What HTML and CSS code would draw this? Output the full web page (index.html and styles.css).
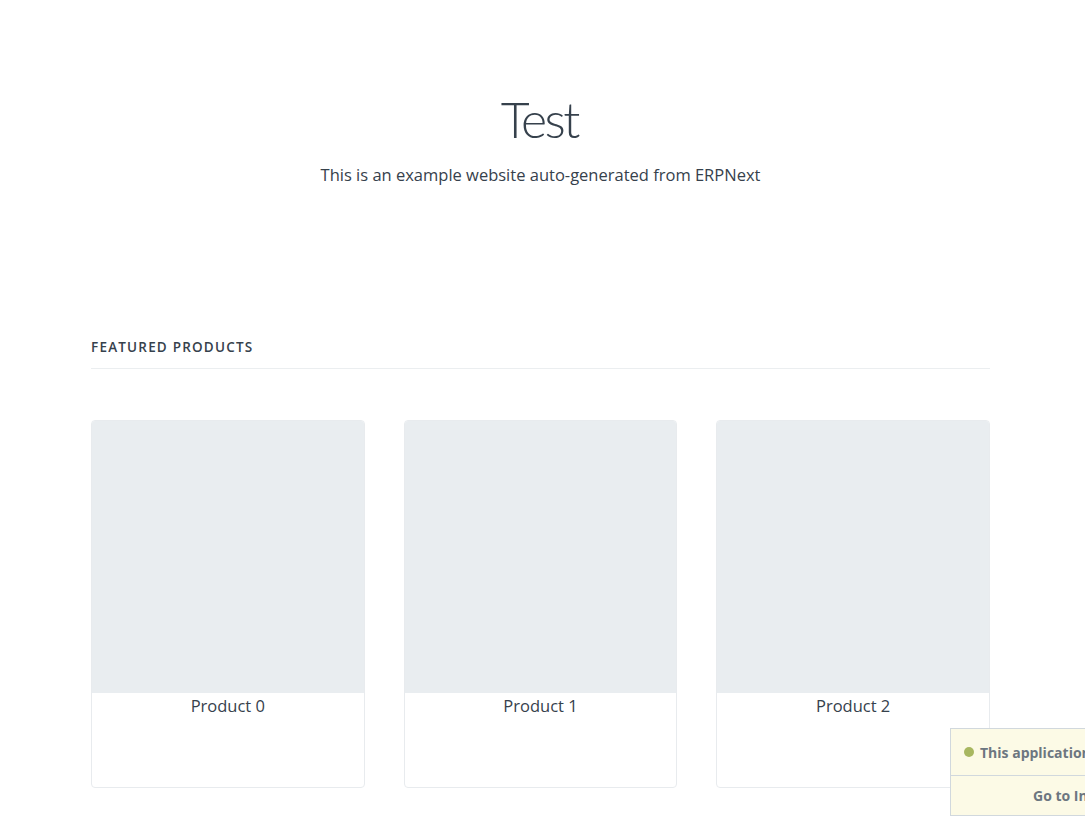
FILE: index.html
```html
<!DOCTYPE html>
<html lang="en">
<head>
<meta charset="utf-8">
<title>Test</title>
<link rel="stylesheet" href="styles.css">
</head>
<body>
<main class="page">
  <section class="hero">
    <h1 class="hero-title">Test</h1>
    <p class="hero-sub">This is an example website auto-generated from ERPNext</p>
  </section>
  <section class="featured">
    <h2 class="featured-title">Featured Products</h2>
    <div class="product-grid">
      <div class="card"><div class="card-img"></div><div class="card-name">Product 0</div></div>
      <div class="card"><div class="card-img"></div><div class="card-name">Product 1</div></div>
      <div class="card"><div class="card-img"></div><div class="card-name">Product 2</div></div>
    </div>
  </section>
</main>
<div class="setup-alert">
  <div class="setup-msg"><span class="dot"></span>This application is not set up yet</div>
  <div class="setup-link">Go to Installer</div>
</div>
</body>
</html>
```
FILE: styles.css
```css
html, body {
  margin: 0;
  padding: 0;
  background: #fff;
  overflow: hidden;
}
body {
  font-family: "Open Sans", "Noto Sans", sans-serif;
  color: #36414c;
}
.page {
  width: 899px;
  margin-left: 91px;
}
.hero {
  text-align: center;
  padding-top: 87px;
}
.hero-title {
  margin: 0;
  font-family: "Lato", "Open Sans", sans-serif;
  font-size: 50px;
  font-weight: 300;
  letter-spacing: -2.5px;
  text-indent: -2.5px;
  line-height: 64px;
  color: #36414c;
}
.hero-sub {
  margin: 12px 0 0;
  font-size: 16.5px;
  line-height: 24px;
  color: #36414c;
}
.featured {
  margin-top: 150px;
}
.featured-title {
  margin: 0;
  font-size: 13.5px;
  font-weight: 600;
  letter-spacing: 1.2px;
  text-transform: uppercase;
  line-height: 20px;
  padding-bottom: 11px;
  border-bottom: 1px solid #ebeef0;
}
.product-grid {
  margin-top: 51px;
  display: grid;
  grid-template-columns: repeat(3, 1fr);
  column-gap: 39px;
}
.card {
  border: 1px solid #e8ebee;
  border-radius: 4px;
  overflow: hidden;
  height: 368px;
  box-sizing: border-box;
}
.card-img {
  height: 272px;
  background: #e9edf0;
}
.card-name {
  text-align: center;
  font-size: 16.5px;
  line-height: 26px;
  padding-top: 0;
}
.setup-alert {
  position: fixed;
  left: 950px;
  top: 728px;
  width: 320px;
  background: #fcfae6;
  border: 1px solid #d1d8dd;
  font-size: 14px;
  font-weight: 700;
  color: #6c7680;
}
.setup-msg {
  height: 46px;
  display: flex;
  align-items: center;
  padding-left: 13px;
  white-space: nowrap;
  border-bottom: 1px solid #d1d8dd;
}
.dot {
  width: 10px;
  height: 10px;
  border-radius: 50%;
  background: #a8b760;
  margin-right: 6px;
}
.setup-link {
  height: 39px;
  display: flex;
  align-items: center;
  padding-left: 82px;
  white-space: nowrap;
}
```
